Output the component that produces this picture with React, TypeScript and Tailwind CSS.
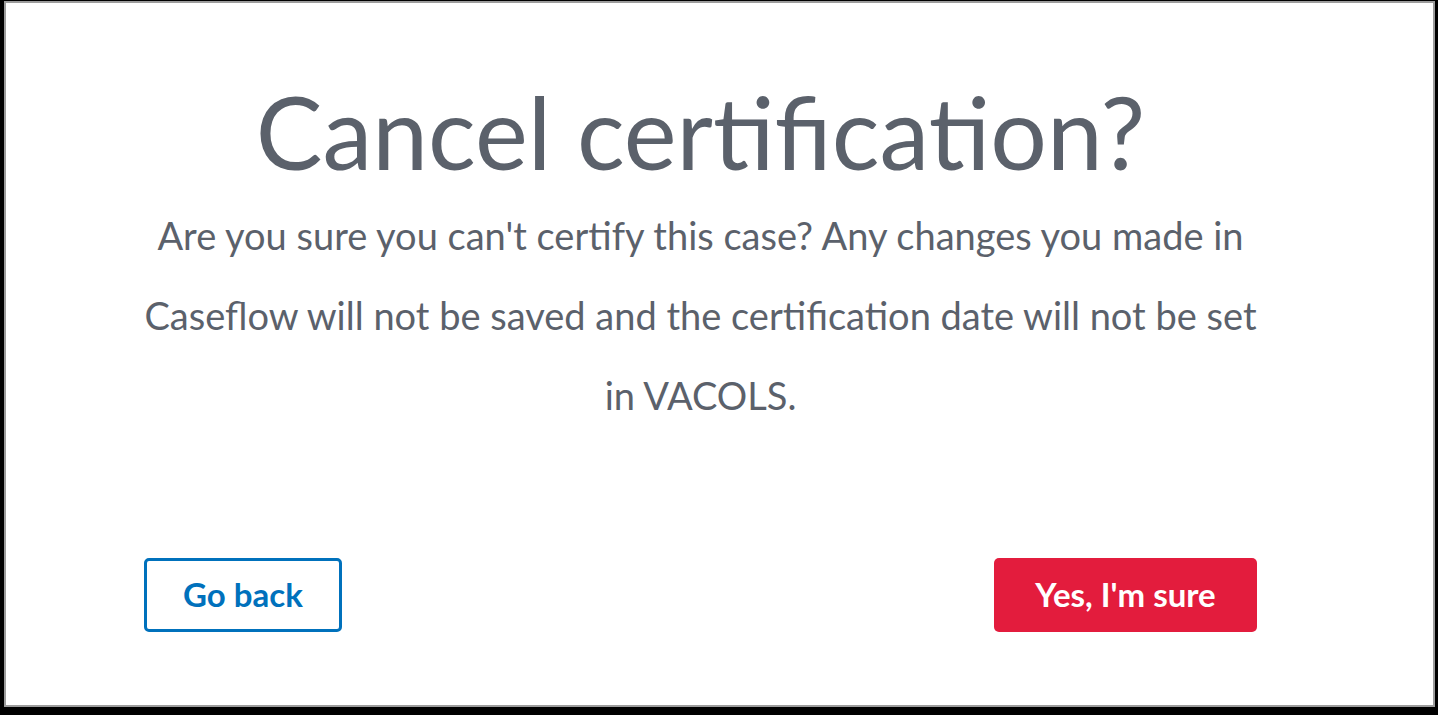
export default function App() {
  return (
    <div className="h-[715px] w-full bg-black pt-px pl-[4px] font-['Lato','Noto_Sans',sans-serif]">
      <div className="h-[706px] w-[1431px] border-2 border-[#9c9c9c] bg-white">
        <div className="ml-[138px] flex w-[1113px] flex-col items-center pt-[73px]">
          <h1 className="text-[100px] leading-[110px] font-normal text-[#5b616b]">
            Cancel certification?
          </h1>
          <p className="mt-[9px] text-center text-[38px] leading-[80px] text-[#5b616b]">
            Are you sure you can't certify this case? Any changes you made in Caseflow will not be saved and the certification date will not be set in VACOLS.
          </p>
          <div className="mt-[123px] flex w-full items-center justify-between">
            <button className="h-[74px] w-[198px] rounded-[5px] border-[3px] border-[#0071bc] text-[33px] font-bold text-[#0071bc]">
              Go back
            </button>
            <button className="h-[74px] w-[263px] rounded-[5px] bg-[#e31c3d] text-[33px] font-bold text-white">
              Yes, I'm sure
            </button>
          </div>
        </div>
      </div>
    </div>
  );
}
